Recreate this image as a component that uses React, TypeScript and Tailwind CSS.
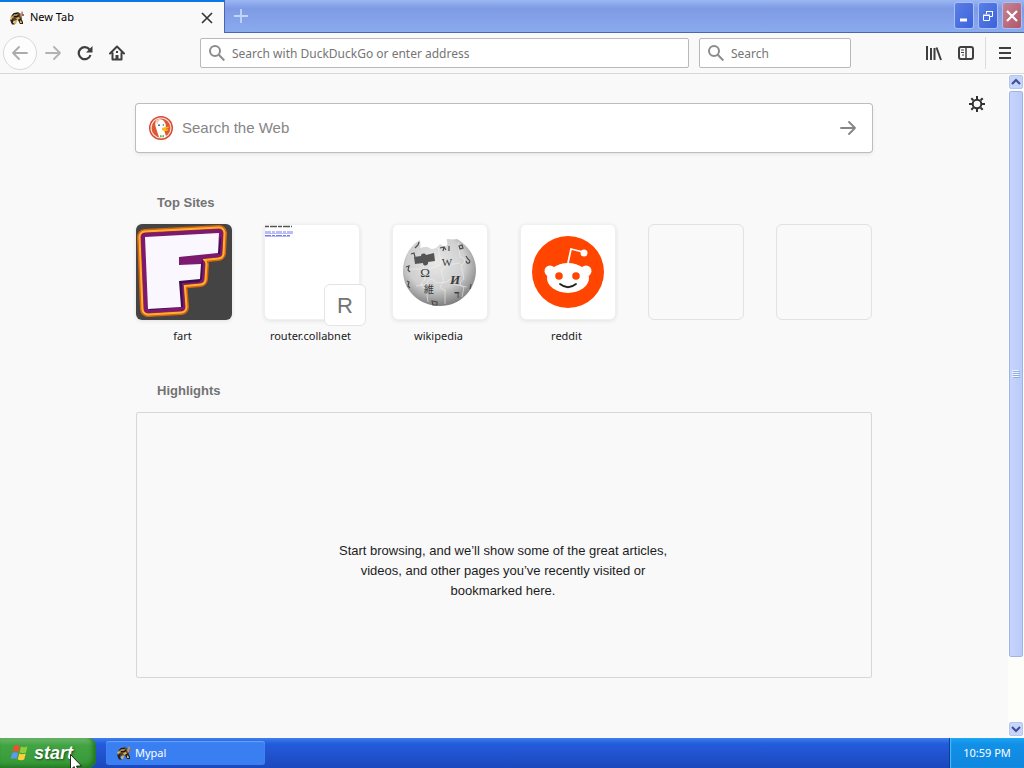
import { ReactNode } from "react";

const uiFont = "font-['Noto_Sans',sans-serif]";
const pageFont = "font-['Liberation_Sans',Arial,sans-serif]";

const MypalLogo = () => (
  <svg className="size-4 shrink-0" viewBox="0 0 16 16" aria-hidden="true">
    <path d="M2 6 5 3l4-1 3 2 1 4-2 3-2-1-3 1-3-1z" fill="#5a4426" />
    <path d="M3 5 5 3l4 0-2 2zM5 6l5-1-1 2H5z" fill="#1d160c" />
    <path d="M1 7 4 6l1 1-3 2zM7 8l3-1 1 2-3 1zM5 12l2-2 1 1-1 3H5z" fill="#d9b45c" />
    <path d="M1 9.500h4l-1 3 2 2H3l-1-2zM9 10l3-2 2 4v2h-3z" fill="#2b2113" />
    <path d="M11 10l2 2v1h-2z" fill="#d9b45c" />
    <path d="M5 4.500h4l-1 1H4z" fill="#f0dfa8" />
    <path d="m11 5 2-4 1 1v3l-2 3z" fill="#a39a86" />
    <path d="M13 4h2v2h-2z" fill="#c45c48" />
  </svg>
);

const SearchIcon = () => (
  <svg className="size-4 shrink-0" viewBox="0 0 16 16" fill="none" stroke="#8c8c8c" strokeWidth="2" aria-hidden="true">
    <circle cx="6" cy="6" r="5" />
    <path d="m9.800 9.800 5.500 5.700" />
  </svg>
);

const ArrowIcon = ({ className = "" }: { className?: string }) => (
  <svg className={`size-4 ${className}`} viewBox="0 0 16 16" fill="none" stroke="currentColor" strokeWidth="1.800" strokeLinecap="round" strokeLinejoin="round">
    <path d="M1 8h14M9 2l6 6-6 6" />
  </svg>
);

const DuckLogo = () => (
  <svg className="size-6 shrink-0" viewBox="0 0 24 24" aria-hidden="true">
    <circle cx="12" cy="12" r="12" fill="#d9482f" />
    <circle cx="12" cy="12" r="10" fill="#de5833" stroke="#f8e4dd" strokeWidth="1.200" />
    <path d="M7 5c2-2.500 7-2.500 8.500 1 1.500 2 1.500 4 1 6l-1 3 1.500 5.500c-3 1.500-5 1.500-7 .5L7 12C6 9 6 7 7 5z" fill="#fff" />
    <path d="M7 4.500c1-1 3-1 4-.5L9 6.500 8 9z" fill="#eccfbe" />
    <circle cx="10" cy="9.200" r=".9" fill="#2d4f8e" />
    <circle cx="14.300" cy="9" r=".7" fill="#2d4f8e" />
    <path d="M13 12c2-1 4-.8 7-1.500 0 1.500-2 2-3.500 2.500 1 .5 2.500 0 3 .7-1 1.800-6 1.800-6.500-.2z" fill="#fdb813" />
    <path d="m11 19 2 .7 2-.9v2.500l-2-.8-2 .8z" fill="#65bc46" />
  </svg>
);

const FLogo = () => {
  const shape = "M9 13 83 9 82 29 43 33V41L65 40 64 55 43 57 45 83 12 85z";
  return (
    <svg className="size-full rounded-md bg-[#444]" viewBox="0 0 96 96" strokeLinejoin="round">
      <path d={shape} fill="#d5630f" stroke="#d5630f" strokeWidth="16" />
      <path d={shape} fill="none" stroke="#ffb034" strokeWidth="13" />
      <path d={shape} fill="none" stroke="#a8351f" strokeWidth="9" />
      <path d={shape} fill="#7d1a70" stroke="#7d1a70" strokeWidth="8" />
      <path d="M43 32 82 29l2-16 1 2-1 15H67l-1 25-3 3-17 1 1 24-33 3-2-2 31-2z" fill="#3b0f50" />
      <path d="M43 33 82 29v3l-15 2-2 6-22 2z" fill="#7d1a70" />
      <path d={shape} fill="#fbf7ff" />
    </svg>
  );
};

const WikipediaLogo = () => (
  <svg className="size-full" viewBox="0 0 96 96">
    <defs>
      <radialGradient id="globe" cx="45%" cy="35%" r="66%">
        <stop offset="0" stopColor="#e8e8e8" />
        <stop offset=".6" stopColor="#cfcfcf" />
        <stop offset="1" stopColor="#7c7c7c" />
      </radialGradient>
    </defs>
    <path d="M28 16c-10 6-17 17-17 31 0 20 17 35 37 35s36-16 36-36c0-13-8-25-19-31-3 1-7 0-10 0-1 2 2 5-1 7-3 1-4-1-6-2-2 3-5 5-9 5-3-3-7-2-11-1 1-3 0-6 0-8z" fill="url(#globe)" />
    <path d="m22 33 7-1c0-3 4-3 5-1l8-2 1 8-7 1c1 4-5 5-5 1l-8 1z" fill="#555" />
    <path d="M18 45h12c0 5 7 5 7 0l11-4c1-5 7-4 7 0l13-2M24 62l11-2c0-6 8-6 8-1l12-1c3-5 8-1 6 2l14 3M46 24l3 14c6 0 5 7 0 8l3 12c-5 2-4 8 1 8v14M31 42l2 14c-6 2-4 8 1 8l2 14M66 18l2 15c6 0 6 7 1 8l3 14c-5 2-5 8 0 8l-2 10" fill="none" stroke="#f3f3f3" strokeWidth=".7" opacity=".8" />
    <g fill="#3c3c3c" textAnchor="middle" className="font-['Liberation_Serif',serif]" fontSize="13">
      <text x="33" y="53">Ω</text>
      <text x="55" y="42" fontSize="11">W</text>
      <text x="63" y="60" fontStyle="italic" fontWeight="bold">И</text>
      <text x="65" y="74" fontSize="11" fontWeight="bold">ד</text>
      <text x="37" y="69" fontSize="10" className="font-['Noto_Sans_CJK_JP',sans-serif]">維</text>
    </g>
    <g fill="none" stroke="#4c4c4c" strokeWidth="1.200">
      <path d="M48 24l4-1 2 3M52 23l-1 4M57 22v5M74 32l2 3c3 2 2 5-1 4l-1-2M67 22l3-1 1 3-3 1zM23 24l3-3 1-3M19 30l3-1 1 4M14 43l3-1-1 4 2 2M15 57l2 1-1 4 2 2M40 77l5 1v3h-4zM79 60l-1 5" />
    </g>
  </svg>
);

const RedditLogo = () => (
  <svg className="size-full" viewBox="0 0 96 96">
    <circle cx="48" cy="48" r="36" fill="#ff4500" />
    <circle cx="30" cy="47" r="5.500" fill="#fff" />
    <circle cx="66" cy="47" r="5.500" fill="#fff" />
    <ellipse cx="48" cy="54" rx="21" ry="15" fill="#fff" />
    <path d="m48 39 3-14 12 3" fill="none" stroke="#fff" strokeWidth="1.800" />
    <circle cx="64" cy="29" r="3.500" fill="#fff" />
    <circle cx="39" cy="52" r="3.800" fill="#ff4500" />
    <circle cx="56" cy="52" r="3.800" fill="#ff4500" />
    <path d="M40 60c5 4 11 4 16 0" fill="none" stroke="#222" strokeWidth="1.800" strokeLinecap="round" />
  </svg>
);

const PageThumb = () => (
  <span className="relative block size-full">
    <svg className="size-full" viewBox="0 0 96 96">
      <path d="M1 2.500h27" stroke="#555" strokeWidth="1.500" strokeDasharray="4 1 7 1" />
      <path d="M1 8h28M1 11.500h25" stroke="#7a7af0" strokeWidth="1.200" strokeDasharray="6 1 3 1" />
      <path d="M1 9.500h28M1 12.500h25" stroke="#a8a8f5" strokeWidth=".8" />
    </svg>
    <span className="absolute -right-1.5 -bottom-1.5 flex size-[42px] items-center justify-center rounded-md border border-[#e4e4e4] bg-white text-[22px] text-[#737373]">
      R
    </span>
  </span>
);

const sites: { name: string; icon: ReactNode }[] = [
  { name: "fart", icon: <FLogo /> },
  { name: "router.collabnet", icon: <PageThumb /> },
  { name: "wikipedia", icon: <WikipediaLogo /> },
  { name: "reddit", icon: <RedditLogo /> },
];

const WindowButton = ({ label, color, children }: { label: string; color: string; children: ReactNode }) => (
  <button aria-label={label} className={`flex h-[27px] w-5 items-center justify-center rounded-[3px] border border-[#a9c0f5] ${color}`}>
    <svg className="size-4 shrink-0" viewBox="0 0 16 16" fill="none" stroke="#fff">
      {children}
    </svg>
  </button>
);

const TitleBar = () => (
  <header className="flex h-[33px] shrink-0 bg-linear-to-b from-[#9bb8f3] via-[#7f9ae4] via-25% to-[#8aabee]">
    <div className="flex w-56 items-center border-t-2 border-[#0a78e4] bg-[#f9f9fa] pr-[9px] pl-[9px]">
      <MypalLogo />
      <span className="ml-[5px] flex-1 text-[11px] text-black">New Tab</span>
      <button aria-label="Close tab" className="p-0.5">
        <svg className="size-3" viewBox="0 0 12 12" stroke="#333" strokeWidth="1.600">
          <path d="m1 1 10 10M11 1 1 11" />
        </svg>
      </button>
    </div>
    <div className="flex flex-1 border-b border-l border-[#4a66ae]">
      <button aria-label="New tab" className="flex w-8 items-center justify-center">
        <svg className="size-4" viewBox="0 0 16 16" stroke="#c4d5fa" strokeWidth="1.800">
          <path d="M8 1v14M1 8h14" />
        </svg>
      </button>
      <div className="ml-auto flex gap-1 pt-0.5 pr-0.5">
        <WindowButton label="Minimize" color="bg-linear-to-br from-[#5b7fe6] to-[#3c62dc]">
          <path d="M4 12h7" strokeWidth="3" />
        </WindowButton>
        <WindowButton label="Restore" color="bg-linear-to-br from-[#5b7fe6] to-[#3c62dc]">
          <path d="M3.500 7.500h6v5h-6zM3 7h7M6.500 6V3.500h6v5H10M6 3.500h7" />
        </WindowButton>
        <WindowButton label="Close" color="bg-linear-to-br from-[#c48493] to-[#b0566a]">
          <path d="m3 3 10 10M13 3 3 13" strokeWidth="2.200" />
        </WindowButton>
      </div>
    </div>
  </header>
);

const NavBar = () => (
  <nav className="flex h-[41px] shrink-0 items-center border-b border-[#d8d8d8] bg-[#f9f9fa] text-[#3f3f3f]">
    <button aria-label="Back" className="ml-[3px] flex size-[34px] items-center justify-center rounded-full border border-[#d8d8d8] bg-white/60 text-[#ababab]">
      <ArrowIcon className="rotate-180" />
    </button>
    <button aria-label="Forward" className="flex w-8 justify-center text-[#b3b3b3]">
      <ArrowIcon />
    </button>
    <button aria-label="Reload" className="flex w-8 justify-center">
      <svg className="size-4" viewBox="0 0 16 16" fill="none" stroke="currentColor" strokeWidth="2.200">
        <path d="M12.500 4.500A6 6 0 1 0 13.500 10" />
        <path d="M15.500 1v6.500H9z" fill="currentColor" stroke="none" />
      </svg>
    </button>
    <button aria-label="Home" className="flex w-8 justify-center">
      <svg className="size-4" viewBox="0 0 16 16" fill="none" stroke="currentColor" strokeWidth="2" strokeLinejoin="round" strokeLinecap="round">
        <path d="m1 8.500 7-7 7 7M3.500 8v6.500h9V8" />
        <path d="M8 14v-4" strokeWidth="3" strokeLinecap="butt" />
        <path d="M8 6v2" strokeLinecap="butt" />
      </svg>
    </button>
    <label className="ml-[67px] flex h-[30px] min-w-0 flex-1 items-center gap-[7px] rounded-xs border border-[#b9b9b9] bg-white px-2">
      <SearchIcon />
      <input aria-label="Address" placeholder="Search with DuckDuckGo or enter address" className="min-w-0 flex-1 pt-px text-[12px] outline-none placeholder:text-[#757575]" />
    </label>
    <label className="ml-2.5 flex h-[30px] w-[152px] items-center gap-[7px] rounded-xs border border-[#b9b9b9] bg-white px-2">
      <SearchIcon />
      <input aria-label="Search" placeholder="Search" className="min-w-0 flex-1 pt-px text-[12px] outline-none placeholder:text-[#757575]" />
    </label>
    <button aria-label="Library" className="ml-[67px] flex w-8 justify-center">
      <svg className="size-4" viewBox="0 0 16 16" fill="none" stroke="currentColor" strokeWidth="2">
        <path d="M1 1v14M5 3v12M8.500 3v12M10.500 2.500l4.500 12.500" />
      </svg>
    </button>
    <button aria-label="Sidebars" className="flex w-8 justify-center">
      <svg className="size-4" viewBox="0 0 16 16" fill="none" stroke="currentColor" strokeWidth="2">
        <rect x="1" y="2" width="14" height="12" rx="2" />
        <path d="M8 2v12" strokeWidth="1.500" />
        <path d="M3 5h3M3 7.500h3M4 10h2" strokeWidth="1" />
      </svg>
    </button>
    <span className="mx-[3px] h-8 w-px bg-[#dcdcdc]" />
    <button aria-label="Menu" className="mr-[3px] flex w-8 justify-center">
      <svg className="size-4" viewBox="0 0 16 16" stroke="currentColor" strokeWidth="2">
        <path d="M2 3h12M2 8h12M2 13h12" />
      </svg>
    </button>
  </nav>
);

const ScrollButton = ({ label, path }: { label: string; path: string }) => (
  <button aria-label={label} className="flex size-3.5 items-center justify-center rounded-xs border border-[#b4c6f2] bg-[#c8d5fb]">
    <svg className="size-2.5 shrink-0" viewBox="0 0 10 10" fill="none" stroke="#405095" strokeWidth="2.200">
      <path d={path} />
    </svg>
  </button>
);

const ScrollBar = () => (
  <div className="flex w-4 shrink-0 flex-col items-center gap-0.5 bg-[#fdfdfa] pt-px pr-px pb-0.5">
    <ScrollButton label="Scroll up" path="m1 7 4-4 4 4" />
    <div className="w-3.5 flex-1">
      <div className="flex h-[90%] w-full items-center justify-center rounded-xs border border-[#9db4ea] bg-linear-to-r from-[#c9d4fc] to-[#b8cbf9]">
        <svg className="size-2" viewBox="0 0 8 8" stroke="#f0f4ff">
          <path d="M0 .5h7M0 2.500h7M0 4.500h7M0 6.500h7" />
          <path d="M1 1.500h7M1 3.500h7M1 5.500h7M1 7.500h7" stroke="#8caee8" />
        </svg>
      </div>
    </div>
    <ScrollButton label="Scroll down" path="m1 3 4 4 4-4" />
  </div>
);

const NewTabPage = () => (
  <main className={`relative flex-1 overflow-hidden bg-[#f9f9fa] ${pageFont}`}>
    <button aria-label="Settings" className="absolute top-[22px] right-[23px] text-[#303030]">
      <svg className="size-4" viewBox="0 0 16 16" fill="none" stroke="currentColor" strokeWidth="2">
        <circle cx="8" cy="8" r="4.300" />
        <path d="M8 0v3M8 13v3M0 8h3M13 8h3M2.300 2.300l2 2M11.700 11.700l2 2M13.700 2.300l-2 2M4.300 11.700l-2 2" />
      </svg>
    </button>
    <div className="mx-auto w-full max-w-[736px] pt-[30px]">
      <form className="flex h-12 items-center rounded-[3px] bg-white pr-4 pl-[13px] shadow-[0_0_0_1px_#bdbdbd,0_2px_4px_#0000001a]">
        <DuckLogo />
        <input aria-label="Search the Web" placeholder="Search the Web" className="ml-[9px] min-w-0 flex-1 pt-px text-[15px] outline-none placeholder:text-[#858585]" />
        <button type="button" aria-label="Search" className="text-[#858585]">
          <ArrowIcon />
        </button>
      </form>

      <section className="mt-[41px]">
        <h2 className="pl-[21px] text-[13px] leading-5 font-bold text-[#737373]">Top Sites</h2>
        <ul className={`mt-[11px] grid grid-cols-6 gap-x-8 ${uiFont}`}>
          {sites.map((site) => (
            <li key={site.name}>
              <a href="#" className="block text-center">
                <span className={`block aspect-square w-full rounded-md bg-white shadow-[inset_0_0_0_1px_#0000000f,0_1px_4px_#0000001a] ${pageFont}`}>
                  {site.icon}
                </span>
                <span className="mt-1.5 block pr-[3px] text-[11px] leading-5 whitespace-nowrap text-[#1a1a1a]">{site.name}</span>
              </a>
            </li>
          ))}
          <li className="aspect-square self-start rounded-md border border-[#e2e2e2]" />
          <li className="aspect-square self-start rounded-md border border-[#e2e2e2]" />
        </ul>
      </section>

      <section className="mt-[35px]">
        <h2 className="pl-[21px] text-[13px] leading-5 font-bold text-[#737373]">Highlights</h2>
        <div className="mt-[11px] flex h-[266px] justify-center rounded-xs border border-[#d7d7db] pt-32">
          <p className="w-[334px] pr-0.5 text-center text-[13px] leading-5 text-[#1c1c1c]">
            Start browsing, and we’ll show some of the great articles, videos, and other pages you’ve recently visited or bookmarked here.
          </p>
        </div>
      </section>
    </div>
  </main>
);

const TaskBar = () => (
  <footer className="flex h-[30px] shrink-0 bg-linear-to-b from-[#3b80ef] via-[#245bdc] via-20% to-[#1c48bd] text-[11px] text-white">
    <button className="relative flex w-24 items-center rounded-r-lg bg-linear-to-b from-[#6cb86c] via-[#41a341] via-25% to-[#359735] pl-2.5 shadow-[inset_-3px_-2px_4px_#237523]">
      <svg className="size-5" viewBox="0 0 20 20">
        <path d="M4 3c2-1 4-1 6 0L8.500 9c-2-1-4-1-6 0z" fill="#e8552d" />
        <path d="M11 3.500c2 1 4 1 6.500 0L16 9.500c-2 1-4 1-6.500 0z" fill="#8fce3c" />
        <path d="M2.200 10c2-1 4-1 6 0l-1.500 6c-2-1-4-1-6 0z" fill="#5c9af0" />
        <path d="M9.200 10.500c2 1 4 1 6.500 0l-1.500 6c-2 1-4 1-6.500 0z" fill="#fbd13a" />
      </svg>
      <span className={`ml-1 text-[18px] font-bold italic [text-shadow:1px_1px_2px_#1d4f1d] ${pageFont}`}>start</span>
      <svg className="absolute top-4 left-[70px] h-5 w-3" viewBox="0 0 12 20" fill="#fff" stroke="#000" strokeWidth=".8">
        <path d="M.5.500v15.500l3.500-3.500 2.500 6 2.500-1-2.500-5.500h5z" />
      </svg>
    </button>
    <button className="my-[3px] ml-2.5 flex w-[159px] items-center gap-[3px] rounded-[3px] bg-[#3a7ff2] pl-2.5 shadow-[inset_0_1px_1px_#6ba2f8]">
      <MypalLogo />
      Mypal
    </button>
    <div className="ml-auto flex w-[75px] items-center justify-center border-l border-[#0b3d99] bg-linear-to-b from-[#1ba6f2] via-[#1290e8] via-20% to-[#0f86dd] shadow-[inset_1px_0_1px_#4cc0fa]">
      <time>10:59 PM</time>
    </div>
  </footer>
);

const App = () => {
  return (
    <div className={`flex h-screen flex-col overflow-hidden ${uiFont}`}>
      <TitleBar />
      <NavBar />
      <div className="flex min-h-0 flex-1">
        <NewTabPage />
        <ScrollBar />
      </div>
      <TaskBar />
    </div>
  );
};
export default App;
